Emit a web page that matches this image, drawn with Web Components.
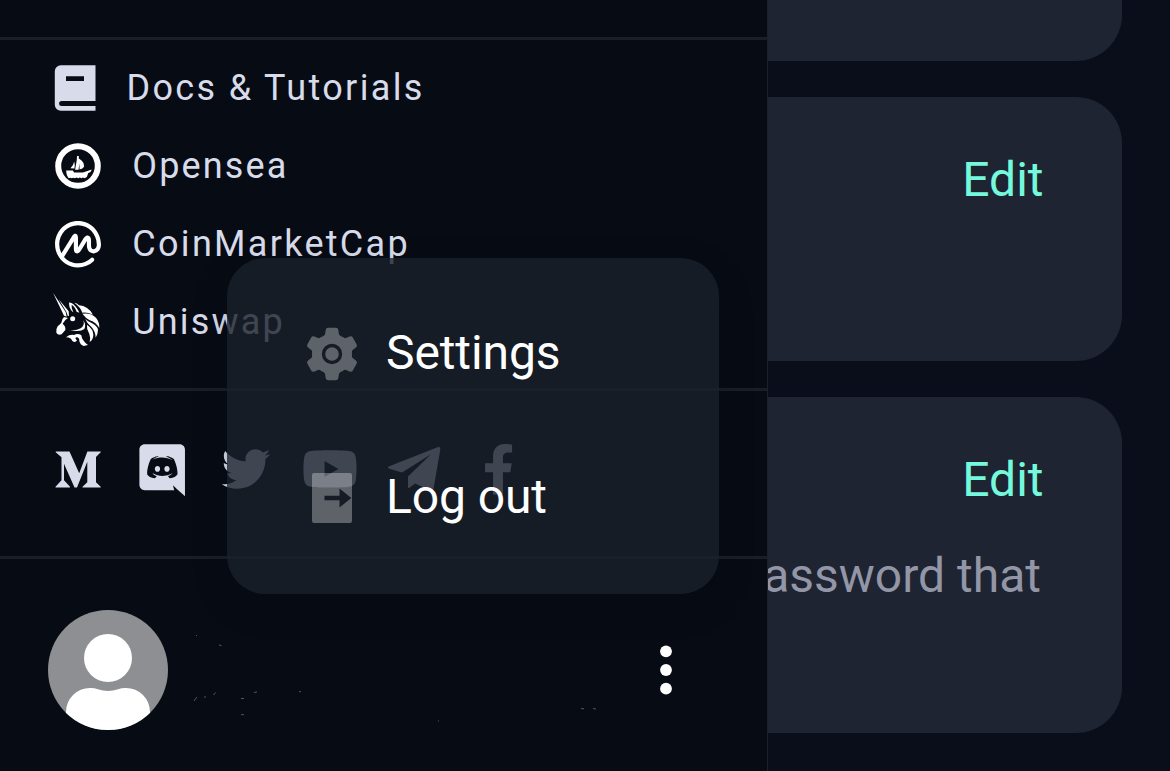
<!DOCTYPE html>
<html lang="en">
<head>
<meta charset="utf-8">
<title>Account</title>
<style>
html,body{margin:0;height:100%;overflow:hidden;background:#0a0e1a}
body{font-family:Roboto,sans-serif}
</style>
</head>
<body>
<app-shell>
  <side-bar slot="side">
    <nav-link icon="docs">Docs &amp; Tutorials</nav-link>
    <nav-link icon="opensea">Opensea</nav-link>
    <nav-link icon="cmc">CoinMarketCap</nav-link>
    <nav-link icon="uniswap">Uniswap</nav-link>
    <social-row slot="social"></social-row>
    <account-row slot="account"></account-row>
  </side-bar>
  <setting-card style="height:61px" edge="top"></setting-card>
  <setting-card style="height:264px" action="Edit"></setting-card>
  <setting-card style="height:336px" action="Edit">assword that</setting-card>
  <pop-menu slot="menu">
    <menu-item icon="gear">Settings</menu-item>
    <menu-item icon="logout">Log out</menu-item>
  </pop-menu>
</app-shell>
<script>
const icons = {
docs:`<svg width="48" height="48" viewBox="54 64 48 48" fill="#d8dcea"><path fill-rule="evenodd" d="M60.5 65.300H95.500V101H61.600a2.5 2.5 0 0 0 0 5H95.500V110.700H60.800a6 6 0 0 1-6-6V71a6 6 0 0 1 6-5.700zM66 76.3v4.8h18v-4.8z"/></svg>`,
opensea:`<svg width="48" height="48" viewBox="54 142 48 48" fill="#fff"><circle cx="78" cy="166" r="19.800" fill="none" stroke="#fff" stroke-width="6"/><path d="M65.700 170.600h7.100l1.300 1.800h8.800l8.900-3-1.300 2.500-2.200 1.200-1.500 4-2.300 1.100-1.600-.6-1.500.7-1.600-.7-1.600.7-1.700-.7-1.600.7-1.600-.6-1.600.5-1.500-.5-1.500.5c-1.700-2-2.500-4.600-2.500-7.600zM77 156h1.800v2.500q5.800 3.500 5.300 8.300-1.300 2-4.500 2.600l-.3-6-.7 6.300h-3.500l1.700-10zM70.500 168.200q3-2.700 3.700-6.700 1 3 .2 7z"/></svg>`,
cmc:`<svg width="48" height="48" viewBox="-.36 -.46 24.720 24.720" fill="#fff"><path d="M20.738 14.341c-.419.265-.912.298-1.286.087-.475-.269-.737-.898-.737-1.774v-2.618c0-1.264-.5-2.164-1.336-2.407-1.416-.413-2.482 1.320-2.882 1.972l-2.498 4.050v-4.950c-.028-1.140-.398-1.821-1.100-2.027-.466-.135-1.161-.081-1.837.953l-5.597 8.987A9.875 9.875 0 0 1 2.326 12c0-5.414 4.339-9.818 9.672-9.818 5.332 0 9.670 4.404 9.670 9.818.004.018.002.034.003.053.050 1.049-.290 1.883-.933 2.290zm3.080-2.340-.001-.055C23.787 5.353 18.497 0 11.997 0 5.480 0 .177 5.383.177 12c0 6.616 5.303 12 11.820 12 2.991 0 5.846-1.137 8.037-3.200.435-.410.460-1.100.057-1.541a1.064 1.064 0 0 0-1.519-.059 9.560 9.560 0 0 1-6.574 2.618c-2.856 0-5.425-1.263-7.197-3.268l5.048-8.105v3.737c0 1.794.696 2.374 1.280 2.544.584.170 1.476.054 2.413-1.468.998-1.614 2.025-3.297 3.023-4.880v2.276c0 1.678.672 3.020 1.843 3.680 1.056.597 2.384.543 3.465-.140 1.312-.828 2.018-2.354 1.944-4.193z"/></svg>`,
uniswap:`<svg width="48" height="60" viewBox="54 292 48 60" fill="#fff" style="overflow:visible"><g transform="translate(50 290) scale(.3333)"><path d="M9 8L47 66 50 80 42 77zM26 28L56 64 57 78 53 77 49 65zM42 81L54 84Q43 90 38 101 48 110 46 120L35 133Q24 137 19 128 17 118 23 109 30 103 34 98 35 87 42 81zM57 38Q68 36 84 60L88 68 80 65Q75 50 65 44 63 54 70 67 57 57 57 38zM73 38Q81 39 87 46 114 48 129 74 112 66 97 68 92 52 73 38zM97 71Q122 67 138 83 149 97 148 114 137 96 119 91 107 84 97 71zM106 87Q113 95 129 101 143 110 144 119 144 132 137 143 136 124 125 112 111 101 106 87zM111 104Q130 118 130 134 130 149 119 156 122 141 118 132 109 118 111 104z"/><circle cx="68" cy="86" r="7.500"/><path d="M56 120Q78 123 92 115 105 106 100 91 109 106 103 117 91 128 56 120zM48 142Q59 133 72 135 84 129 94 136 96 153 114 165L101 168Q92 166 88 154 89 142 79 142 73 145 81 151 76 160 67 153L63 146Q56 142 48 142z"/></g></svg>`,
gear:(()=>{let t='';for(let i=0;i<6;i++)t+=`<path transform="rotate(${i*60})" d="M-9-17 L-7-19.500 L-6.300-24 Q-6-26.200-3.800-26.200 H3.800 Q6-26.200 6.300-24 L7-19.500 L9-17 L0 0z"/>`;return `<svg width="54" height="54" viewBox="-27 -27 54 54"><mask id="m"><g fill="#fff"><circle r="20"/>${t}</g><circle r="8.500" fill="none" stroke="#000" stroke-width="3.400"/></mask><rect x="-27" y="-27" width="54" height="54" fill="#fff" fill-opacity=".31" mask="url(#m)"/></svg>`})(),
logout:`<svg width="54" height="54" viewBox="305 471 54 54"><path fill="#fff" fill-opacity=".31" fill-rule="evenodd" d="M314 473h36a2 2 0 0 1 2 2v46a2 2 0 0 1-2 2h-36a2 2 0 0 1-2-2v-46a2 2 0 0 1 2-2zM324.500 495.700v4.600h15v7.200l11.800-9.500-11.800-9.500v7.200z"/></svg>`
};
const define=(name,render)=>customElements.define(name,class extends HTMLElement{
  constructor(){super();this.attachShadow({mode:'open'})}
  connectedCallback(){this.shadowRoot.innerHTML=render(this)}
});
define('app-shell',()=>`<style>
:host{display:flex;position:relative;width:1170px;height:771px;overflow:hidden;background:#0a0e1a}
main{flex:1;display:flex;flex-direction:column;gap:36px;padding-right:48px;min-width:0}
</style><slot name="side"></slot><main><slot></slot></main><slot name="menu"></slot>`);
define('side-bar',()=>`<style>
:host{display:flex;flex-direction:column;box-sizing:border-box;position:relative;z-index:1;width:768px;height:771px;background:#070b14;border-right:1px solid #1c202a}
.top{height:37px}
nav,.social,.account{border-top:3px solid #1a1e27;box-sizing:border-box}
nav{height:351px;padding-top:9px}
.social{height:168px}
.account{flex:1}
</style><div class="top"></div><nav><slot></slot></nav><div class="social"><slot name="social"></slot></div><div class="account"><slot name="account"></slot></div>`);
define('nav-link',e=>{const i=e.getAttribute('icon'),d=i==='docs';return `<style>
:host{display:flex;align-items:center;height:78px;padding-left:54px;gap:${d?24.500:30.300}px;color:#d8dcea;font-size:36px;line-height:42px;letter-spacing:${d?2.350:i==='cmc'?2.300:2.150}px;white-space:nowrap}
svg{display:block;flex:none}
</style>${icons[i]}<span><slot></slot></span>`});
define('social-row',()=>`<style>
:host{display:flex;height:165px;padding-left:54px;align-items:center}
svg{display:block;flex:none}
</style><svg width="468" height="60" viewBox="54 443.800 468 60" fill="#d8dcea">
<path d="M55.700 451.300H69.500L79.200 473 87.400 451.300H100.700V452L96 456.700V482L100.700 486.500V487.300H82.500V486.500L87.300 482V461.500L77 487.300H74.500L64 463.500V480L70 486.500V487.300H55.500V486.500L61.500 480V457L55.700 452z"/>
<path transform="translate(139.400 444) scale(.1017)" d="M297.216 243.200c0 15.616-11.520 28.416-26.112 28.416-14.336 0-26.112-12.800-26.112-28.416s11.520-28.416 26.112-28.416c14.592 0 26.112 12.800 26.112 28.416zm-119.552-28.416c-14.592 0-26.112 12.800-26.112 28.416s11.776 28.416 26.112 28.416c14.592 0 26.112-12.800 26.112-28.416.256-15.616-11.520-28.416-26.112-28.416zM448 52.736V512c-64.494-56.994-43.868-38.128-118.784-107.776l13.568 47.360H52.480C23.552 451.584 0 428.032 0 398.848V52.736C0 23.552 23.552 0 52.480 0h343.040C424.448 0 448 23.552 448 52.736zm-72.960 242.688c0-82.432-36.864-149.248-36.864-149.248-36.864-27.648-71.936-26.880-71.936-26.880l-3.584 4.096c43.520 13.312 63.744 32.512 63.744 32.512-60.811-33.329-132.244-33.335-191.232-7.424-9.472 4.352-15.104 7.424-15.104 7.424s21.248-20.224 67.328-33.536l-2.560-3.072s-35.072-.768-71.936 26.880c0 0-36.864 66.816-36.864 149.248 0 0 21.504 37.120 78.080 38.912 0 0 9.472-11.520 17.152-21.248-32.512-9.728-44.800-30.208-44.800-30.208 3.766 2.636 9.976 6.053 10.496 6.400 43.210 24.198 104.588 32.126 159.744 8.960 8.960-3.328 18.944-8.192 29.440-15.104 0 0-12.800 20.992-46.336 30.464 7.680 9.728 16.896 20.736 16.896 20.736 56.576-1.792 78.336-38.912 78.336-38.912z"/>
<path transform="translate(221.800 444.500) scale(.0947)" d="M459.370 151.716c.325 4.548.325 9.097.325 13.645 0 138.720-105.583 298.558-298.558 298.558-59.452 0-114.680-17.219-161.137-47.106 8.447.974 16.568 1.299 25.340 1.299 49.055 0 94.213-16.568 130.274-44.832-46.132-.975-84.792-31.188-98.112-72.772 6.498.974 12.995 1.624 19.818 1.624 9.421 0 18.843-1.300 27.614-3.573-48.081-9.747-84.143-51.980-84.143-102.985v-1.299c13.969 7.797 30.214 12.670 47.431 13.319-28.264-18.843-46.781-51.005-46.781-87.391 0-19.492 5.197-37.360 14.294-52.954 51.655 63.675 129.300 105.258 216.365 109.807-1.624-7.797-2.599-15.918-2.599-24.040 0-57.828 46.782-104.934 104.934-104.934 30.213 0 57.502 12.670 76.670 33.137 23.715-4.548 46.456-13.320 66.599-25.340-7.798 24.366-24.366 44.833-46.132 57.827 21.117-2.273 41.584-8.122 60.426-16.243-14.292 20.791-32.161 39.308-52.628 54.253z"/>
<path transform="translate(302 443.800) scale(.0972)" d="M549.655 124.083c-6.281-23.650-24.787-42.276-48.284-48.597C458.781 64 288 64 288 64S117.220 64 74.629 75.486c-23.497 6.322-42.003 24.947-48.284 48.597-11.412 42.867-11.412 132.305-11.412 132.305s0 89.438 11.412 132.305c6.281 23.650 24.787 41.500 48.284 47.821C117.220 448 288 448 288 448s170.780 0 213.371-11.486c23.497-6.321 42.003-24.171 48.284-47.821 11.412-42.867 11.412-132.305 11.412-132.305s0-89.438-11.412-132.305zm-317.510 213.508V175.185l142.739 81.205-142.739 81.201z"/>
<path d="M388.700 466.200L437.500 447Q440.800 446.200 440.300 449.300L433.500 488.500Q433 491.500 430.200 490L415 483.200 409.500 487.600Q408 488.600 408 486.500V476.200L431 454 402 472.300 388.700 468.300Q387.200 467.300 388.700 466.200z"/>
<path transform="translate(482.800 443.800) scale(.0985)" d="M279.140 288l14.220-92.660h-88.910v-60.130c0-25.350 12.420-50.060 52.240-50.060h40.420V6.260S260.430 0 225.360 0c-73.220 0-121.080 44.380-121.080 124.720v70.620H22.890V288h81.390v224h100.170V288z"/>
</svg>`);
define('account-row',()=>`<style>
:host{display:flex;height:120px;padding:51px 94px 0 48px;align-items:center}
.marks{margin:0 auto 0 24px}
svg{display:block;flex:none}
</style><svg width="120" height="120" viewBox="0 0 120 120"><clipPath id="c"><circle cx="60" cy="60" r="60"/></clipPath><g clip-path="url(#c)"><path fill="#8e8f93" d="M0 0h120v120H0z"/><circle cx="60" cy="48" r="24" fill="#fff"/><path fill="#fff" d="M18 120V102A24 24 0 0 1 42 78Q46 77.800 50 79.300 60 82.500 70 79.300 74 77.800 78 78A24 24 0 0 1 102 102V120z"/></g></svg>
<svg class="marks" width="458" height="120" viewBox="192 610 458 120" fill="none" stroke="#737780" stroke-width=".7"><path d="M196 635.500h1M219 645l2.500.6M194 701l3-4M204 697.500l2-1M213.500 695l2-2.500M241 698.500h3M254 692.500l3-.6M241 714.700h3M299 691.700h2M581 708.500l3 .3M593 708.500l3 .5M438 721h1"/></svg>
<svg width="16" height="60" viewBox="658 640 16 60" fill="#fff" style="margin-right:-1px"><circle cx="666" cy="651.300" r="5.900"/><circle cx="666" cy="670" r="5.900"/><circle cx="666" cy="688.700" r="5.900"/></svg>`);
define('setting-card',e=>`<style>
:host{display:flex;flex-direction:column;align-items:flex-end;box-sizing:border-box;flex:none;padding-right:78.500px;background:#1e2431;border-radius:0 ${e.hasAttribute('edge')?0:'46px'} 46px 0;font-size:48px;line-height:56px;white-space:nowrap}
.edit{margin-top:55px;color:#75f8dc}
.text{margin-top:40px;padding-right:2.500px;color:#9296a6}
</style>${e.hasAttribute('action')?`<span class="edit">${e.getAttribute('action')}</span>`:''}${e.textContent.trim()?'<span class="text"><slot></slot></span>':''}`);
define('pop-menu',()=>`<style>
:host{position:absolute;z-index:2;left:227px;top:258px;width:492px;height:336px;box-sizing:border-box;padding:24px 0;border-radius:38px;background:rgba(26,32,43,.8);box-shadow:0 12px 36px rgba(6,9,16,.2)}
</style><slot></slot>`);
define('menu-item',e=>`<style>
:host{display:flex;align-items:center;height:144px;padding-left:78px;gap:27px;color:#fff;font-size:48px;line-height:56px;letter-spacing:-.1px}
svg{display:block;flex:none}
span{padding-bottom:2px}
</style>${icons[e.getAttribute('icon')]}<span><slot></slot></span>`);
</script>
</body>
</html>
